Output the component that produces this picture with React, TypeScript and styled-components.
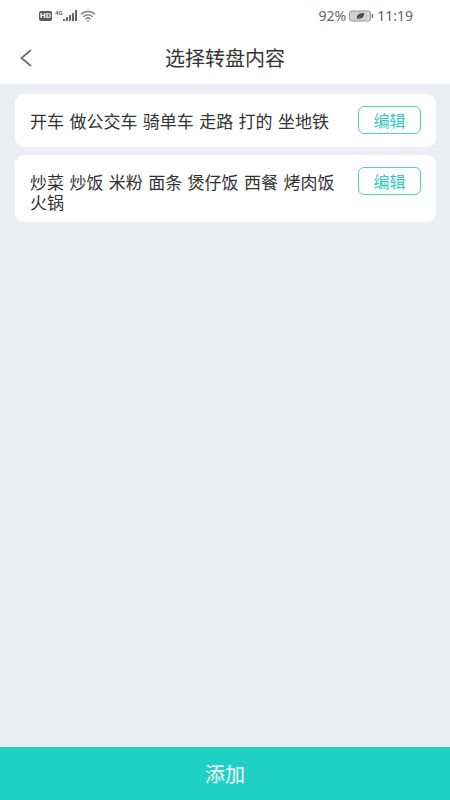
import React from "react";
import styled, { createGlobalStyle } from "styled-components";

const GlobalStyle = createGlobalStyle`
  *, *::before, *::after { box-sizing: border-box; }
  body {
    margin: 0;
    background: #ebeff1;
    color: #333;
    font-family: Roboto, "Noto Sans CJK SC", sans-serif;
  }
  button { font-family: inherit; cursor: pointer; }
`;

const Page = styled.div`
  display: flex;
  flex-direction: column;
  min-height: 100vh;
`;

const StatusBar = styled.div`
  display: flex;
  justify-content: space-between;
  align-items: center;
  height: 32px;
  padding: 0 37px 0 39px;
  background: #fff;
  color: #666;
  font-family: "Noto Sans", sans-serif;
  font-size: 14px;
  line-height: 16px;
`;

const StatusGroup = styled.div`
  display: flex;
  align-items: center;
  gap: 3px;
`;

const HdBadge = styled.span`
  width: 13px;
  border-radius: 2px;
  background: #5c5c5c;
  color: #fff;
  text-align: center;
  font-family: Roboto, sans-serif;
  font-size: 8px;
  font-weight: 700;
  line-height: 10px;
`;

const Network = styled.span`
  display: flex;
  align-items: flex-start;
`;

const NetworkType = styled.span`
  font-family: Roboto, sans-serif;
  font-size: 6px;
  font-weight: 700;
  line-height: 6px;
`;

const TopBar = styled.header`
  display: grid;
  grid-template-columns: 52px 1fr 52px;
  align-items: center;
  height: 52px;
  background: #fff;
`;

const BackButton = styled.button`
  display: flex;
  align-items: center;
  justify-content: center;
  height: 52px;
  padding: 0;
  border: 0;
  background: none;
  color: #707070;
`;

const Title = styled.h1`
  margin: 0;
  padding-top: 2px;
  text-align: center;
  font-size: 20px;
  font-weight: 400;
  line-height: 24px;
`;

const List = styled.ul`
  flex: 1;
  display: flex;
  flex-direction: column;
  gap: 8px;
  margin: 0;
  padding: 10px 14px 10px 15px;
  list-style: none;
`;

const Card = styled.li`
  display: flex;
  align-items: flex-start;
  justify-content: space-between;
  gap: 16px;
  padding: 0 15px;
  border-radius: 9px;
  background: #fff;
`;

const Options = styled.p`
  flex: 1;
  margin: 0;
  padding: 18px 0 9px;
  font-family: "DejaVu Sans", "Noto Sans CJK SC", sans-serif;
  font-size: 17px;
  line-height: 20px;
`;

const EditButton = styled.button`
  flex: none;
  width: 63px;
  height: 28px;
  margin: 12px 0 13px;
  padding: 3px 0 0;
  border: 1px solid #55cfc3;
  border-radius: 6px;
  background: #fff;
  color: #35c9bd;
  font-size: 16px;
  line-height: 22px;
`;

const AddButton = styled.button`
  position: sticky;
  bottom: 0;
  height: 53px;
  padding: 3px 0 0;
  border: 0;
  background: #1fd1c5;
  color: #fff;
  font-size: 20px;
  line-height: 24px;
`;

const wheels = [
  "开车 做公交车 骑单车 走路 打的 坐地铁",
  "炒菜 炒饭 米粉 面条 煲仔饭 西餐 烤肉饭 火锅",
];

const SignalIcon = () => (
  <svg width="14" height="12" viewBox="0 0 14 12" fill="#666" aria-hidden="true">
    <rect x="0" y="9" width="2" height="2" />
    <rect x="3" y="7" width="2" height="4" />
    <rect x="6" y="5" width="2" height="6" />
    <rect x="9" y="3" width="2" height="8" />
    <rect x="12" y="0" width="2" height="11" />
  </svg>
);

const WifiIcon = () => (
  <svg width="16" height="12" viewBox="0 0 16 12" fill="none" stroke="#777" strokeWidth="1.3" aria-hidden="true">
    <path d="M1 4.4C5 .3 11 .3 15 4.4M3.3 6.8c2.7-2.7 6.7-2.7 9.4 0M5.6 9.1c1.4-1.3 3.4-1.3 4.8 0" />
    <circle cx="8" cy="10.8" r=".9" fill="#777" stroke="none" />
  </svg>
);

const BatteryIcon = () => (
  <svg width="25" height="12" viewBox="0 0 25 12" aria-hidden="true">
    <rect x=".5" y="1" width="21" height="10" rx="2" fill="#d2d2d2" stroke="#999" />
    <path d="M23.5 4v4" stroke="#666" strokeWidth="1.4" />
    <path d="M8 9.3C7 5.2 10 3.3 15 3c.1 4-2.3 6.3-5.9 5.6L8 9.3Z" fill="#444" />
    <path d="m8.6 8.6 3.6-3.2" stroke="#bbb" strokeWidth=".5" />
  </svg>
);

const BackIcon = () => (
  <svg width="12" height="18" viewBox="0 0 12 18" fill="none" stroke="currentColor" strokeWidth="1.8" aria-hidden="true">
    <path d="M11 1 1.5 9l9.5 8" />
  </svg>
);

export default function App() {
  return (
    <>
      <GlobalStyle />
      <Page>
        <StatusBar>
          <StatusGroup>
            <HdBadge>HD</HdBadge>
            <Network>
              <NetworkType>4G</NetworkType>
              <SignalIcon />
            </Network>
            <WifiIcon />
          </StatusGroup>
          <StatusGroup>
            <span>92%</span>
            <BatteryIcon />
            <span>11:19</span>
          </StatusGroup>
        </StatusBar>
        <TopBar>
          <BackButton type="button" aria-label="返回">
            <BackIcon />
          </BackButton>
          <Title>选择转盘内容</Title>
        </TopBar>
        <List>
          {wheels.map((options) => (
            <Card key={options}>
              <Options>{options}</Options>
              <EditButton type="button">编辑</EditButton>
            </Card>
          ))}
        </List>
        <AddButton type="button">添加</AddButton>
      </Page>
    </>
  );
}
